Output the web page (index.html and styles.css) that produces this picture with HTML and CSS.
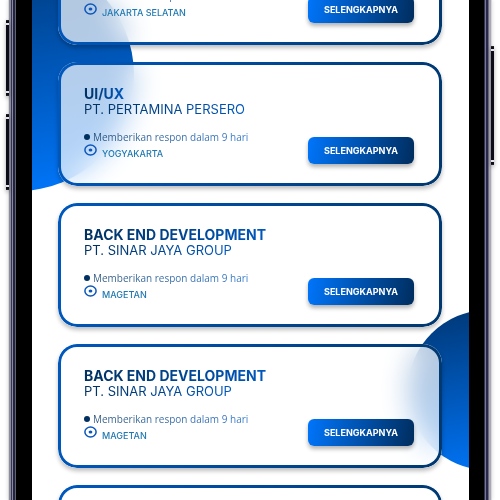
FILE: index.html
```html
<!DOCTYPE html>
<html lang="id">
<head>
<meta charset="utf-8">
<title>Lowongan</title>
<meta name="viewport" content="width=device-width, initial-scale=1">
<link rel="stylesheet" href="styles.css">
</head>
<body>
<svg class="defs" aria-hidden="true">
  <symbol id="place" viewBox="0 0 13 12">
    <ellipse cx="6.5" cy="6" rx="5.6" ry="5" fill="none" stroke="currentColor" stroke-width="1.5"/>
    <ellipse cx="6.5" cy="6" rx="1.9" ry="1.6" fill="currentColor"/>
  </symbol>
</svg>
<div class="phone">
  <span class="key key-up"></span>
  <span class="key key-down"></span>
  <span class="key key-power"></span>
  <main class="screen">
    <span class="orb orb-left"></span>
    <span class="orb orb-right"></span>
    <div class="list">
      <article class="card">
        <div class="info">
          <h2><span class="ink">UI/UX</span></h2>
          <p class="company"><span class="ink">PT. PERTAMINA PERSERO</span></p>
          <p class="reply"><span class="ink">Memberikan respon dalam 9 hari</span></p>
          <p class="place"><svg><use href="#place"/></svg><span>JAKARTA SELATAN</span></p>
        </div>
        <button type="button">SELENGKAPNYA</button>
      </article>
      <article class="card">
        <div class="info">
          <h2><span class="ink">UI/UX</span></h2>
          <p class="company"><span class="ink">PT. PERTAMINA PERSERO</span></p>
          <p class="reply"><span class="ink">Memberikan respon dalam 9 hari</span></p>
          <p class="place"><svg><use href="#place"/></svg><span>YOGYAKARTA</span></p>
        </div>
        <button type="button">SELENGKAPNYA</button>
      </article>
      <article class="card">
        <div class="info">
          <h2><span class="ink">BACK END DEVELOPMENT</span></h2>
          <p class="company"><span class="ink">PT. SINAR JAYA GROUP</span></p>
          <p class="reply"><span class="ink">Memberikan respon dalam 9 hari</span></p>
          <p class="place"><svg><use href="#place"/></svg><span>MAGETAN</span></p>
        </div>
        <button type="button">SELENGKAPNYA</button>
      </article>
      <article class="card">
        <div class="info">
          <h2><span class="ink">BACK END DEVELOPMENT</span></h2>
          <p class="company"><span class="ink">PT. SINAR JAYA GROUP</span></p>
          <p class="reply"><span class="ink">Memberikan respon dalam 9 hari</span></p>
          <p class="place"><svg><use href="#place"/></svg><span>MAGETAN</span></p>
        </div>
        <button type="button">SELENGKAPNYA</button>
      </article>
      <article class="card"></article>
    </div>
  </main>
</div>
</body>
</html>
```
FILE: styles.css
```css
* { box-sizing: border-box; }

body {
  margin: 0;
  background: #fff;
  font-family: Inter, "Open Sans", sans-serif;
  overflow: hidden;
}

h2, p { margin: 0; }

.defs { position: absolute; width: 0; height: 0; }

.phone {
  position: relative;
  height: 100vh;
  margin: 0 8px;
  padding: 0 23px 0 24px;
  background:
    linear-gradient(90deg, #d5d5da 0 1px, #8d8d99 1px 3px, #34345a 3px 4px, #8a8aa8 4px 5px, #24243c 5px 7px, #5d6475 7px 8px, transparent 8px) left / 50% 100% no-repeat,
    linear-gradient(270deg, #d8d8dc 0 1px, #a9a8b4 1px 3px, #6c6a80 3px 4px, #29284a 4px 6px, #77769a 6px 7px, #33334a 7px 8px, transparent 8px) right / 50% 100% no-repeat,
    #000;
  box-shadow: 0 0 4px rgba(0, 0, 0, .15);
}

.key {
  position: absolute;
  width: 3px;
  background: #0b0b1a;
  border-block: 1px solid #222;
  box-shadow: 0 2px 4px rgba(0, 0, 0, .35);
}
.key::before {
  content: "";
  position: absolute;
  inset: 2px 0;
  border-block: 2px solid #e4e4ea;
}
.key-up { left: -2px; top: 20px; height: 76px; }
.key-down { left: -2px; top: 114px; height: 76px; }
.key-power { right: -2px; top: 46px; height: 119px; }

.screen {
  position: relative;
  height: 100%;
  overflow: hidden;
  background: #fff;
}

.orb {
  position: absolute;
  border-radius: 50%;
  background: linear-gradient(170deg, #003673, #0078ff);
}
.orb-left { left: -130px; top: -41px; width: 232px; height: 232px; }
.orb-right { right: -99px; top: 310px; width: 160px; height: 160px; }

.list {
  display: flex;
  flex-direction: column;
  gap: 17px;
  margin-top: -79px;
  padding: 0 27px 0 26px;
}

.card {
  position: relative;
  flex: none;
  display: flex;
  justify-content: space-between;
  align-items: flex-end;
  height: 124px;
  padding: 24px 28px 22px 26px;
  border-radius: 19px;
  background: rgba(255, 255, 255, .7);
  backdrop-filter: blur(14px);
  box-shadow: 0 3px 4px rgba(0, 0, 0, .25);
}
.card::before {
  content: "";
  position: absolute;
  inset: 0;
  padding: 3px;
  border-radius: inherit;
  background: linear-gradient(100deg, #0058bd, #00386f);
  mask: linear-gradient(#000 0 0) content-box exclude, linear-gradient(#000 0 0);
  pointer-events: none;
}

.info { align-self: flex-start; }

.ink {
  background: linear-gradient(90deg, #00305f, #0058bd);
  background-clip: text;
  color: transparent;
}

h2 { font-size: 14px; line-height: 16px; font-weight: 700; }
.company { font-size: 13px; line-height: 15px; }

.reply {
  display: flex;
  align-items: center;
  gap: 3px;
  margin-top: 14px;
  font: 10px/12px "Open Sans", sans-serif;
}
.reply .ink { opacity: .8; }
.reply::before {
  content: "";
  width: 6px;
  height: 6px;
  border-radius: 50%;
  background: #00305f;
}

.place {
  display: flex;
  gap: 5px;
  margin-top: 1px;
  font-size: 9px;
  font-weight: 500;
  line-height: 20px;
  color: #1f78b0;
}
.place svg { width: 13px; height: 12px; color: #0d57bb; }

button {
  width: 106px;
  height: 27px;
  padding: 0;
  border: 0;
  border-radius: 6px;
  background: linear-gradient(100deg, #0075fb, #002d5e);
  box-shadow: 0 3px 4px rgba(0, 0, 0, .3);
  color: #fff;
  font: 700 9px/27px Inter, "Open Sans", sans-serif;
}
```
